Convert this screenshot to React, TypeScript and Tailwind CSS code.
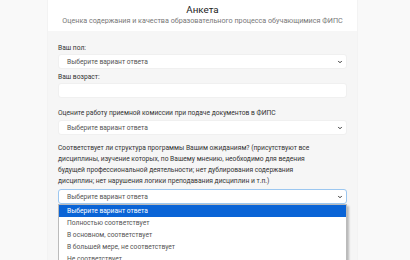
import { ChevronDown } from 'lucide-react';

const options = [
  'Выберите вариант ответа',
  'Полностью соответствует',
  'В основном, соответствует',
  'В большей мере, не соответствует',
  'Не соответствует',
];

function FakeSelect({ focused }: { focused?: boolean }) {
  return (
    <div
      className={`flex h-[15px] items-center justify-between rounded-[3px] border bg-white pl-[8px] pr-[3px] text-[#555] ${
        focused ? 'border-[#9cc7f0]' : 'border-[#f0f0f0]'
      }`}
    >
      <span>Выберите вариант ответа</span>
      <ChevronDown size={6} strokeWidth={4} className="text-[#333]" />
    </div>
  );
}

export default function App() {
  return (
    <div className="h-[260px] w-[410px] overflow-hidden bg-[#f9f9f9] font-['Roboto',sans-serif] text-[6.7px] leading-[12px] text-[#333]">
      <div className="ml-[47px] h-full w-[311px] border-x border-[#f3f3f3] bg-[#f6f6f6]">
        <div className="flex h-[31px] flex-col items-center bg-white pt-[4px]">
          <div className="text-[9.8px] leading-[12px] text-[#222]">Анкета</div>
          <div className="text-[7.2px] leading-[10px] text-[#777]">
            Оценка содержания и качества образовательного процесса обучающимися ФИПС
          </div>
        </div>
        <div className="px-[10px] pt-[11px]">
          <div className="leading-[12px]">Ваш пол:</div>
          <FakeSelect />
          <div className="mt-[2px]">Ваш возраст:</div>
          <div className="h-[15px] rounded-[3px] border border-[#f0f0f0] bg-white" />
          <div className="mt-[9px]">Оцените работу приемной комиссии при подаче документов в ФИПС</div>
          <div className="mt-[1px]">
            <FakeSelect />
          </div>
          <div className="mt-[8px] leading-[11px]">
            Соответствует ли структура программы Вашим ожиданиям? (присутствуют все
            <br />
            дисциплины, изучение которых, по Вашему мнению, необходимо для ведения
            <br />
            будущей профессиональной деятельности; нет дублирования содержания
            <br />
            дисциплин; нет нарушения логики преподавания дисциплин и т.п.)
          </div>
          <div className="relative mt-[2px]">
            <FakeSelect focused />
            <div className="absolute left-0 right-0 top-[15px] border border-[#bbb] bg-white shadow-[2px_2px_2px_rgba(0,0,0,0.25)]">
              {options.map((o, i) => (
                <div
                  key={o}
                  className={`h-[12px] pl-[8px] leading-[12px] ${i === 0 ? 'bg-[#0a64d6] text-white' : 'text-[#555]'}`}
                >
                  {o}
                </div>
              ))}
            </div>
          </div>
        </div>
      </div>
    </div>
  );
}
